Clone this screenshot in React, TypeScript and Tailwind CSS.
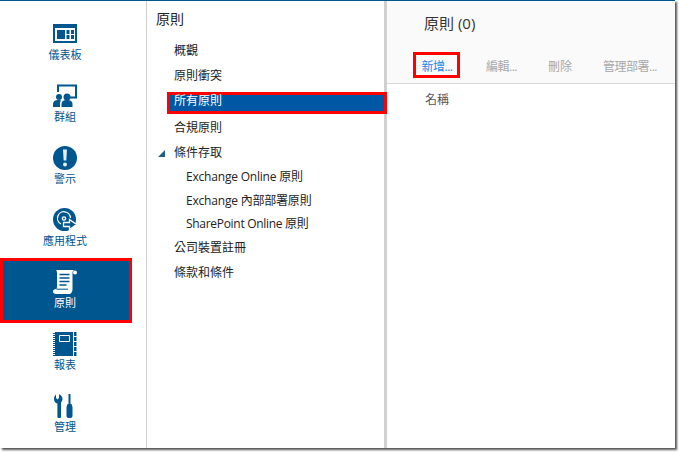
const BLUE = "#00568f";

function DashboardIcon() {
  return (
    <svg width="24" height="24" viewBox="0 0 24 24">
      <path fill={BLUE} fillRule="evenodd" d="M0 2h24v19H0zM2 6v13h20V6z" />
      <path fill={BLUE} d="M4 8h8v9H4zM13.500 8h3v4h-3zM18 8h3v4h-3zM13.500 13h3v4h-3zM18 13h3v4h-3z" />
    </svg>
  );
}

function GroupIcon() {
  return (
    <svg width="24" height="24" viewBox="0 0 24 24">
      <path fill="none" stroke={BLUE} strokeWidth="2" d="M5 8V1.500h18v12h-7" />
      <circle cx="6" cy="13" r="3" fill={BLUE} />
      <circle cx="14" cy="13" r="3.500" fill={BLUE} />
      <path fill={BLUE} d="M0 23v-3c0-2.500 2-4 5-4h1c1 0 1.500.3 2 .8-.8 1-1 2-1 3.200v3zM8.500 23v-3c0-2.500 2-4 5-4h1c3 0 5 1.500 5 4v3z" />
    </svg>
  );
}

function AlertIcon() {
  return (
    <svg width="24" height="24" viewBox="0 0 24 24">
      <circle cx="12" cy="12" r="12" fill={BLUE} />
      <path fill="#e8eef4" d="M10 3.500h4l-.7 11h-2.600z" />
      <circle cx="12" cy="18.500" r="2" fill="#e8eef4" />
    </svg>
  );
}

function AppsIcon() {
  return (
    <svg width="24" height="24" viewBox="0 0 24 24">
      <circle cx="11.500" cy="11.500" r="11.500" fill={BLUE} />
      <path fill="none" stroke="#fff" strokeWidth="1.300" d="M8 16a6.500 6.500 0 1 1 9.500-6" />
      <circle cx="11" cy="10.500" r="2.300" fill="#fff" />
      <circle cx="11" cy="10.500" r="0.900" fill={BLUE} />
      <path fill={BLUE} stroke="#fff" strokeWidth="1.300" d="M10.500 14.500h6V11.500l7 5-7 5V18.500h-6z" />
    </svg>
  );
}

function PolicyIcon() {
  return (
    <svg width="24" height="24" viewBox="0 0 24 24">
      <path fill="#fff" d="M3 0h18c-1 .6-1.500 1.500-1.500 3v16c0 2.500-1 4-2.500 5H3c-1.800 0-3-1-3-2.500S1.200 19 3 19h.5c.5-1 .5-2 .5-4V4C4 2 4 1 3 0z" />
      <circle cx="22" cy="2.500" r="2" fill="#fff" />
      <path stroke={BLUE} strokeWidth="1.300" d="M6.500 4.500h10M6.500 8h10M6.500 11.500h10M6.500 15h7" />
      <path stroke={BLUE} strokeWidth="1" d="M3.500 19.200H15" />
    </svg>
  );
}

function ReportIcon() {
  return (
    <svg width="24" height="24" viewBox="0 0 24 24">
      <path fill={BLUE} d="M2 0h18v24H2z" />
      <path fill={BLUE} d="M21 0h2.500v4H21zM21 5h2.500v4H21zM21 10h2.500v4H21zM21 15h2.500v4H21zM21 20h2.500v4H21z" />
      <path stroke={BLUE} strokeWidth="1" d="M0 1.500h2M0 3.500h2M0 5.500h2M0 7.500h2M0 9.500h2M0 11.500h2M0 13.500h2M0 15.500h2M0 17.500h2M0 19.500h2M0 21.500h2M0 23.500h2" />
      <path fill="none" stroke="#fff" strokeWidth="1" d="M6.500 3.500h10v6h-10z" />
    </svg>
  );
}

function AdminIcon() {
  return (
    <svg width="24" height="24" viewBox="0 0 24 24">
      <path fill={BLUE} d="M3 .500v3.500l1.500 1.500L6 4V.300c2 .700 3.500 2.500 3.500 4.700 0 1.500-.7 2.800-1.500 3.500V22.500a1.800 1.800 0 0 1-3.600 0V9.500C2.300 9 1 7.300 1 5 1 3 1.800 1.500 3 .500z" />
      <path fill={BLUE} d="M15.500 0h2v10h-2zM14.500 10h4l1 3v9c0 1-1 2-2 2h-2c-1 0-2-1-2-2v-9z" />
    </svg>
  );
}

const navItems = [
  { label: "儀表板", icon: <DashboardIcon /> },
  { label: "群組", icon: <GroupIcon /> },
  { label: "警示", icon: <AlertIcon /> },
  { label: "應用程式", icon: <AppsIcon /> },
  { label: "原則", icon: <PolicyIcon />, active: true },
  { label: "報表", icon: <ReportIcon /> },
  { label: "管理", icon: <AdminIcon /> },
];

function Sidebar() {
  return (
    <div className="flex w-[147px] shrink-0 flex-col border-r border-[#cfcfcf] pt-[9px]">
      {navItems.map((item) =>
        item.active ? (
          <div
            key={item.label}
            className="z-10 -mb-[3px] flex h-[65px] w-[132px] flex-col items-center border-[3px] border-[#ff0000] bg-[#00568f] pr-[2px] pt-[9px] text-white"
          >
            {item.icon}
            <span className="mt-px text-[11px] leading-4">{item.label}</span>
          </div>
        ) : (
          <div
            key={item.label}
            className="flex h-[62px] w-[132px] flex-col items-center pr-[2px] pt-[12px] text-[#00568f]"
          >
            {item.icon}
            <span className="mt-px text-[11px] leading-4">{item.label}</span>
          </div>
        ),
      )}
    </div>
  );
}

function TreeColumn() {
  return (
    <div className="w-[240px] shrink-0 border-r-[3px] border-[#d0d0d0] text-xs text-[#222222]">
      <div className="h-[37px] pl-[9px] pt-[8px] text-sm leading-5">原則</div>
      <div className="flex h-[25.5px] items-center pl-[27px]">概觀</div>
      <div className="flex h-[25.5px] items-center pl-[27px]">原則衝突</div>
      <div className="relative z-10 mb-[1.25px] ml-[20px] mt-[3px] flex h-[22px] w-[220px] items-center border-[3px] border-[#ff0000] bg-[#0057a3] pb-[4px] pl-[4px] text-white">
        所有原則
      </div>
      <div className="flex h-[25.5px] items-center pl-[27px]">合規原則</div>
      <div className="relative flex h-[24.5px] items-center pl-[27px]">
        <span className="absolute left-[11px] top-[9px] h-0 w-0 border-b-[7px] border-l-[7px] border-b-[#1f5f86] border-l-transparent" />
        條件存取
      </div>
      <div className="flex h-[23.5px] items-center pl-[39px] tracking-[-0.2px]">Exchange Online 原則</div>
      <div className="flex h-[23.5px] items-center pl-[39px] tracking-[-0.2px]">Exchange 內部部署原則</div>
      <div className="flex h-[23.5px] items-center pl-[39px] tracking-[-0.3px]">SharePoint Online 原則</div>
      <div className="flex h-[25px] items-center pl-[27px]">公司裝置註冊</div>
      <div className="flex h-[25px] items-center pl-[27px]">條款和條件</div>
    </div>
  );
}

function ContentPane() {
  return (
    <div className="flex min-w-0 flex-1 flex-col">
      <div className="h-[83px] border-b border-[#d8d8d8] bg-[#fafafa]">
        <div className="pl-[37px] pt-[10px] text-[15px] leading-6 text-[#333333]">原則 (0)</div>
        <div className="mt-[17px] flex items-center text-xs tracking-[-0.5px]">
          <div className="ml-[26px] flex h-[26px] w-[47px] items-center justify-center border-[3px] border-[#ff0000] pl-[1px] pt-[3px] text-[#1e88e5]">
            新增...
          </div>
          <span className="ml-[26px] pt-[4px] text-[#a8a8a8]">編輯...</span>
          <span className="ml-[31px] pt-[4px] tracking-normal text-[#a8a8a8]">刪除</span>
          <span className="ml-[31px] pt-[4px] text-[#a8a8a8]">管理部署...</span>
        </div>
      </div>
      <div className="pl-[38px] pt-[8px] text-xs leading-4 text-[#555555]">名稱</div>
    </div>
  );
}

export default function App() {
  return (
    <div className="h-[452px] w-[679px] overflow-hidden bg-white [font-family:'Open_Sans','Noto_Sans_CJK_TC',sans-serif]">
      <div className="flex h-[448px] w-[675px] border-t border-[#00568f] bg-white shadow-[2px_2px_2px_#555555]">
        <Sidebar />
        <TreeColumn />
        <ContentPane />
      </div>
    </div>
  );
}
